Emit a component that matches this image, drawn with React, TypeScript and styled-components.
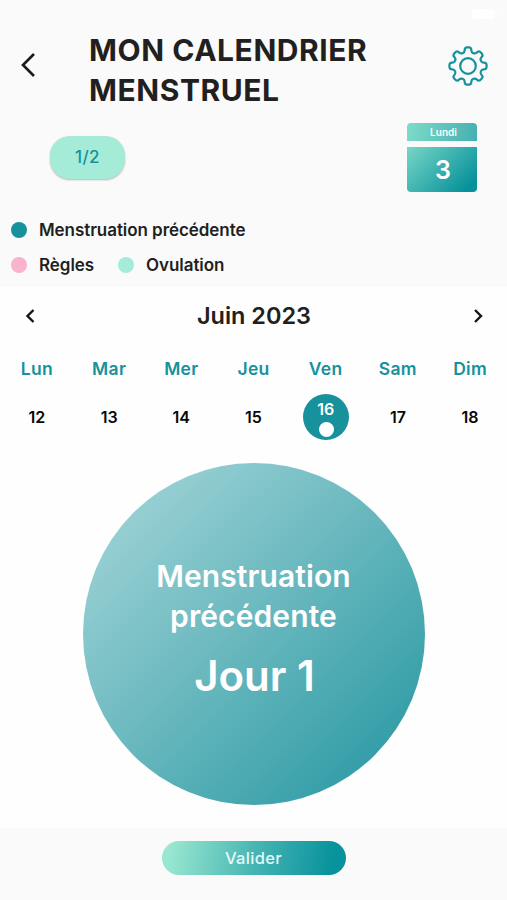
import React from 'react';
import styled, { createGlobalStyle } from 'styled-components';

const teal = '#17919b';
const mint = '#a4ecd8';

const GlobalStyle = createGlobalStyle`
  * { box-sizing: border-box; }
  body {
    margin: 0;
    background: #fff;
    font-family: Inter, "Liberation Sans", sans-serif;
  }
  button {
    border: 0;
    padding: 0;
    background: none;
    font: inherit;
    color: inherit;
  }
`;

const Screen = styled.main`
  display: flex;
  flex-direction: column;
  width: 507px;
  height: 900px;
  background: #fefefe;
  color: #221f20;
  overflow: hidden;
`;

const Header = styled.header`
  flex: none;
  display: flex;
  flex-direction: column;
  height: 287px;
  background: #fafafa;
`;

const StatusBar = styled.div`
  display: flex;
  justify-content: flex-end;
  height: 30px;
  padding: 9px 10px 0;
`;

const TitleBar = styled.div`
  display: grid;
  grid-template-columns: 89px 1fr 80px;
  align-items: center;
  height: 80px;
`;

const BackButton = styled.button`
  display: flex;
  margin: -10px 0 0 20px;
`;

const SettingsButton = styled.button`
  display: flex;
  margin: -9px 0 0 20px;
`;

const Title = styled.h1`
  margin: -1px 0 0;
  font-size: 30px;
  font-weight: 650;
  line-height: 40px;
  letter-spacing: 0.55px;
`;

const Summary = styled.div`
  display: flex;
  justify-content: space-between;
  height: 102px;
  padding: 13px 30px 0 50px;
`;

const StepBadge = styled.div`
  display: flex;
  align-items: center;
  justify-content: center;
  width: 75px;
  height: 43px;
  margin-top: 13px;
  padding-bottom: 1px;
  border-radius: 20px;
  background: ${mint};
  box-shadow: 0 1px 2px rgba(0, 0, 0, 0.28);
  color: ${teal};
  font-size: 17px;
  font-weight: 550;
  letter-spacing: 0.4px;
`;

const DateCard = styled.div`
  display: flex;
  flex-direction: column;
  gap: 6px;
  width: 70px;
  height: 69px;
  color: #fff;
`;

const DateCardDay = styled.div`
  height: 18px;
  border-radius: 4px 4px 0 0;
  background: linear-gradient(100deg, #7edbc9, #45afb0);
  font-size: 10px;
  font-weight: 600;
  line-height: 19px;
  padding-left: 3px;
  text-align: center;
`;

const DateCardNumber = styled.div`
  height: 45px;
  padding-left: 2px;
  border-radius: 0 0 4px 4px;
  background: linear-gradient(135deg, #78d6c6, #07929b 88%);
  font-size: 25px;
  font-weight: 600;
  line-height: 46px;
  text-align: center;
`;

const Legend = styled.div`
  display: flex;
  flex-direction: column;
  padding-left: 11px;
`;

const LegendRow = styled.div`
  display: flex;
  align-items: center;
  gap: 24px;
  height: 35.5px;
`;

const LegendItem = styled.span`
  display: flex;
  align-items: center;
  gap: 12px;
  font-size: 17px;
  font-weight: 600;
  letter-spacing: -0.06px;
`;

const LegendDot = styled.i<{ $color: string }>`
  width: 16px;
  height: 16px;
  border-radius: 50%;
  background: ${({ $color }) => $color};
`;

const MonthBar = styled.div`
  flex: none;
  display: flex;
  align-items: center;
  justify-content: space-between;
  height: 58px;
  padding: 0 22px 0 23px;
`;

const MonthName = styled.h2`
  margin: 0;
  font-size: 23.5px;
  font-weight: 570;
  line-height: 30px;
  letter-spacing: -0.02px;
`;

const MonthButton = styled.button`
  display: flex;
`;

const Week = styled.div`
  flex: none;
  display: grid;
  grid-template-columns: repeat(7, 72.2px);
  justify-content: center;
  height: 119px;
`;

const DayColumn = styled.div`
  display: flex;
  flex-direction: column;
  align-items: center;
`;

const DayName = styled.span`
  height: 49px;
  color: ${teal};
  font-size: 17.5px;
  font-weight: 600;
  line-height: 48px;
  letter-spacing: 0.3px;
`;

const DayNumber = styled.button<{ $selected?: boolean }>`
  display: flex;
  flex-direction: column;
  align-items: center;
  justify-content: ${({ $selected }) => ($selected ? 'flex-start' : 'center')};
  width: 46px;
  height: 46px;
  padding-top: ${({ $selected }) => ($selected ? '5px' : '0')};
  border-radius: 50%;
  background: ${({ $selected }) => ($selected ? teal : 'transparent')};
  color: ${({ $selected }) => ($selected ? '#fff' : '#080808')};
  font-size: 16px;
  font-weight: 600;
  line-height: 20px;
`;

const DayMarker = styled.i`
  width: 15px;
  height: 15px;
  margin: 3px 0 0 1px;
  border-radius: 50%;
  background: #fff;
`;

const PhaseCircle = styled.section`
  flex: none;
  align-self: center;
  display: flex;
  flex-direction: column;
  align-items: center;
  width: 342px;
  height: 342px;
  margin: -1px 0 23px;
  padding-top: 93px;
  border-radius: 50%;
  background: linear-gradient(135deg, #a2d5d8 5%, #6bb9bf 47%, #2898a3 95%);
  color: #fff;
  text-align: center;
`;

const PhaseName = styled.p`
  width: 230px;
  margin: 0;
  font-size: 30px;
  font-weight: 620;
  line-height: 40px;
  letter-spacing: 0.1px;
`;

const PhaseDay = styled.strong`
  margin: 14px 0 0 2px;
  font-size: 42px;
  font-weight: 640;
  line-height: 52px;
`;

const Footer = styled.footer`
  flex: 1;
  display: flex;
  justify-content: center;
  align-items: flex-start;
  padding-top: 13px;
  background: #fafafa;
`;

const SubmitButton = styled.button`
  width: 184px;
  height: 34px;
  border-radius: 17px;
  background: linear-gradient(100deg, #98e7d0 5%, #48b5b3 50%, #07929c 92%);
  color: #e4fafa;
  font-size: 16.5px;
  font-weight: 500;
  line-height: 34px;
  letter-spacing: 0.35px;
`;

/** Outline of an eight-toothed gear with rounded teeth and valleys, centred on the origin. */
function gearPath(): string {
  const at = (degrees: number, radius: number) => {
    const angle = (degrees * Math.PI) / 180;
    return `${(radius * Math.sin(angle)).toFixed(2)} ${(-radius * Math.cos(angle)).toFixed(2)}`;
  };
  let d = `M${at(-12, 16)}`;
  for (let tooth = 0; tooth < 8; tooth++) {
    const a = tooth * 45;
    d += `Q${at(a - 10.5, 18.6)} ${at(a - 4, 18.6)}L${at(a + 4, 18.6)}`;
    d += `Q${at(a + 10.5, 18.6)} ${at(a + 12, 16)}`;
    d += `C${at(a + 15, 13.4)} ${at(a + 30, 13.4)} ${at(a + 33, 16)}`;
  }
  return `${d}Z`;
}

const GearIcon = () => (
  <svg width="42" height="42" viewBox="-21 -21 42 42" fill="none" stroke={teal} strokeWidth="2.2">
    <path d={gearPath()} strokeLinejoin="round" />
    <circle r="7.8" />
  </svg>
);

const BackIcon = () => (
  <svg width="16" height="26" viewBox="0 0 16 26" fill="none" stroke="#1d1b1c" strokeWidth="2.7">
    <path d="M14 2 L3 13 L14 24" />
  </svg>
);

const SmallChevron = ({ forward = false }: { forward?: boolean }) => (
  <svg width="14" height="18" viewBox="0 0 14 18" fill="none" stroke="#151515" strokeWidth="2.4">
    <path d={forward ? 'M4 3 L10 9 L4 15' : 'M10.5 3 L4.5 9 L10.5 15'} />
  </svg>
);

const BatteryIcon = () => (
  <svg width="25" height="10" viewBox="0 0 25 10" fill="#fff">
    <rect width="22" height="10" rx="3" />
    <rect x="23" y="3" width="1.5" height="4" rx="0.75" />
  </svg>
);

const days = [
  { name: 'Lun', date: 12 },
  { name: 'Mar', date: 13 },
  { name: 'Mer', date: 14 },
  { name: 'Jeu', date: 15 },
  { name: 'Ven', date: 16, selected: true },
  { name: 'Sam', date: 17 },
  { name: 'Dim', date: 18 },
];

export default function App() {
  return (
    <>
      <GlobalStyle />
      <Screen>
        <Header>
          <StatusBar>
            <BatteryIcon />
          </StatusBar>
          <TitleBar>
            <BackButton aria-label="Retour">
              <BackIcon />
            </BackButton>
            <Title>
              MON CALENDRIER
              <br />
              MENSTRUEL
            </Title>
            <SettingsButton aria-label="Paramètres">
              <GearIcon />
            </SettingsButton>
          </TitleBar>
          <Summary>
            <StepBadge>1/2</StepBadge>
            <DateCard>
              <DateCardDay>Lundi</DateCardDay>
              <DateCardNumber>3</DateCardNumber>
            </DateCard>
          </Summary>
          <Legend>
            <LegendRow>
              <LegendItem>
                <LegendDot $color={teal} />
                Menstruation précédente
              </LegendItem>
            </LegendRow>
            <LegendRow>
              <LegendItem>
                <LegendDot $color="#fab3cd" />
                Règles
              </LegendItem>
              <LegendItem>
                <LegendDot $color={mint} />
                Ovulation
              </LegendItem>
            </LegendRow>
          </Legend>
        </Header>
        <MonthBar>
          <MonthButton aria-label="Semaine précédente">
            <SmallChevron />
          </MonthButton>
          <MonthName>Juin 2023</MonthName>
          <MonthButton aria-label="Semaine suivante">
            <SmallChevron forward />
          </MonthButton>
        </MonthBar>
        <Week>
          {days.map((day) => (
            <DayColumn key={day.name}>
              <DayName>{day.name}</DayName>
              <DayNumber $selected={day.selected}>
                {day.date}
                {day.selected && <DayMarker />}
              </DayNumber>
            </DayColumn>
          ))}
        </Week>
        <PhaseCircle>
          <PhaseName>Menstruation précédente</PhaseName>
          <PhaseDay>Jour 1</PhaseDay>
        </PhaseCircle>
        <Footer>
          <SubmitButton>Valider</SubmitButton>
        </Footer>
      </Screen>
    </>
  );
}
